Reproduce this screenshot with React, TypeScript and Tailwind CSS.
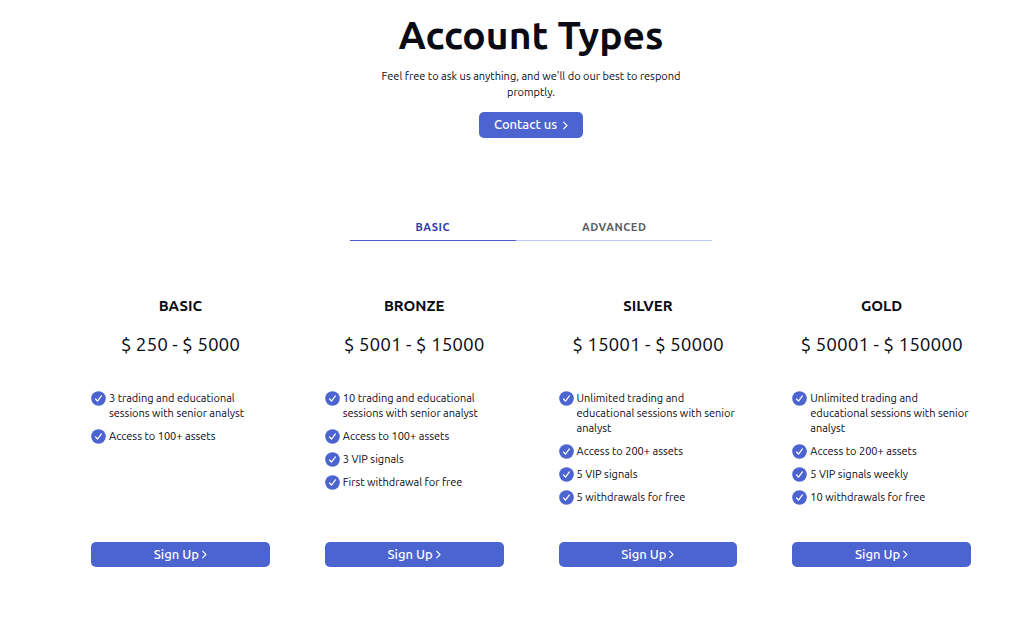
import React, { useState } from 'react';

interface Plan {
  name: string;
  range: string;
  features: string[];
}

type TabKey = 'basic' | 'advanced';

const plans: Plan[] = [
  {
    name: 'BASIC',
    range: '$ 250 - $ 5000',
    features: ['3 trading and educational sessions with senior analyst', 'Access to 100+ assets'],
  },
  {
    name: 'BRONZE',
    range: '$ 5001 - $ 15000',
    features: [
      '10 trading and educational sessions with senior analyst',
      'Access to 100+ assets',
      '3 VIP signals',
      'First withdrawal for free',
    ],
  },
  {
    name: 'SILVER',
    range: '$ 15001 - $ 50000',
    features: [
      'Unlimited trading and educational sessions with senior analyst',
      'Access to 200+ assets',
      '5 VIP signals',
      '5 withdrawals for free',
    ],
  },
  {
    name: 'GOLD',
    range: '$ 50001 - $ 150000',
    features: [
      'Unlimited trading and educational sessions with senior analyst',
      'Access to 200+ assets',
      '5 VIP signals weekly',
      '10 withdrawals for free',
    ],
  },
];

function CheckIcon() {
  return (
    <svg className="w-[15px] h-[15px] shrink-0" viewBox="0 0 15 15" fill="none" aria-hidden="true">
      <circle cx="7.5" cy="7.5" r="7.3" fill="#4c64d0" />
      <path d="M4.6 8l1.9 2.1 3.9-5.2" stroke="white" strokeWidth={1.2} strokeLinecap="round" strokeLinejoin="round" />
    </svg>
  );
}

function Chevron() {
  return (
    <svg className="w-[5px] h-[9px] shrink-0" viewBox="0 0 5 9" fill="none" stroke="currentColor" aria-hidden="true">
      <path d="M0.6 1.2L4 4.5L0.6 7.8" strokeWidth={1.1} strokeLinecap="round" strokeLinejoin="round" />
    </svg>
  );
}

export default function App() {
  const [tab, setTab] = useState<TabKey>('basic');

  return (
    <div className="bg-white text-[#080a14] min-h-screen pl-[91px] pr-[53px] pt-2 font-[Ubuntu,'Noto_Sans',sans-serif]">
      {/* Heading */}
      <header className="flex flex-col items-center text-center">
        <h1 className="text-[39px] leading-[54px] font-bold">Account Types</h1>
        <p className="mt-1.5 max-w-[310px] text-[11px] leading-4">
          Feel free to ask us anything, and we'll do our best to respond promptly.
        </p>
        <a
          href="#contact"
          className="mt-3 flex h-[26px] items-center gap-1.5 rounded-[5px] bg-[#4c64d0] px-[15px] text-[13px] font-medium text-white"
        >
          Contact us
          <Chevron />
        </a>
      </header>

      {/* Tabs */}
      <div className="mt-[74px] flex justify-center" role="tablist">
        {(['basic', 'advanced'] as TabKey[]).map((t) => (
          <button
            key={t}
            role="tab"
            aria-selected={tab === t}
            onClick={() => setTab(t)}
            className={`border-b px-[66px] pt-1 pb-0.5 text-[11px] leading-[22px] font-bold tracking-wider ${
              tab === t ? 'border-[#4c5cd0] text-[#2f37b4]' : 'border-[#bcc8f2] text-[#5c5c5c]'
            }`}
          >
            {t === 'basic' ? 'BASIC' : 'ADVANCED'}
          </button>
        ))}
      </div>

      {/* Plans */}
      <div className="mt-[55px] grid grid-cols-4 gap-[55px]">
        {plans.map((plan) => (
          <section key={plan.name} className="flex flex-col">
            <h2 className="text-center text-[15px] leading-5 font-bold">{plan.name}</h2>
            <p className="mt-3.5 text-center text-[19px] leading-7 whitespace-nowrap">{plan.range}</p>
            <ul className="mt-[33px] mb-[37px] flex flex-col gap-2">
              {plan.features.map((f) => (
                <li key={f} className="flex items-start gap-[3px] text-[11px] leading-[15px]">
                  <CheckIcon />
                  <span>{f}</span>
                </li>
              ))}
            </ul>
            <a
              href="#signup"
              className="mt-auto flex h-[25px] items-center justify-center gap-[3px] rounded-[5px] bg-[#4c64d0] text-[13px] font-medium text-white"
            >
              Sign Up
              <Chevron />
            </a>
          </section>
        ))}
      </div>
    </div>
  );
}
